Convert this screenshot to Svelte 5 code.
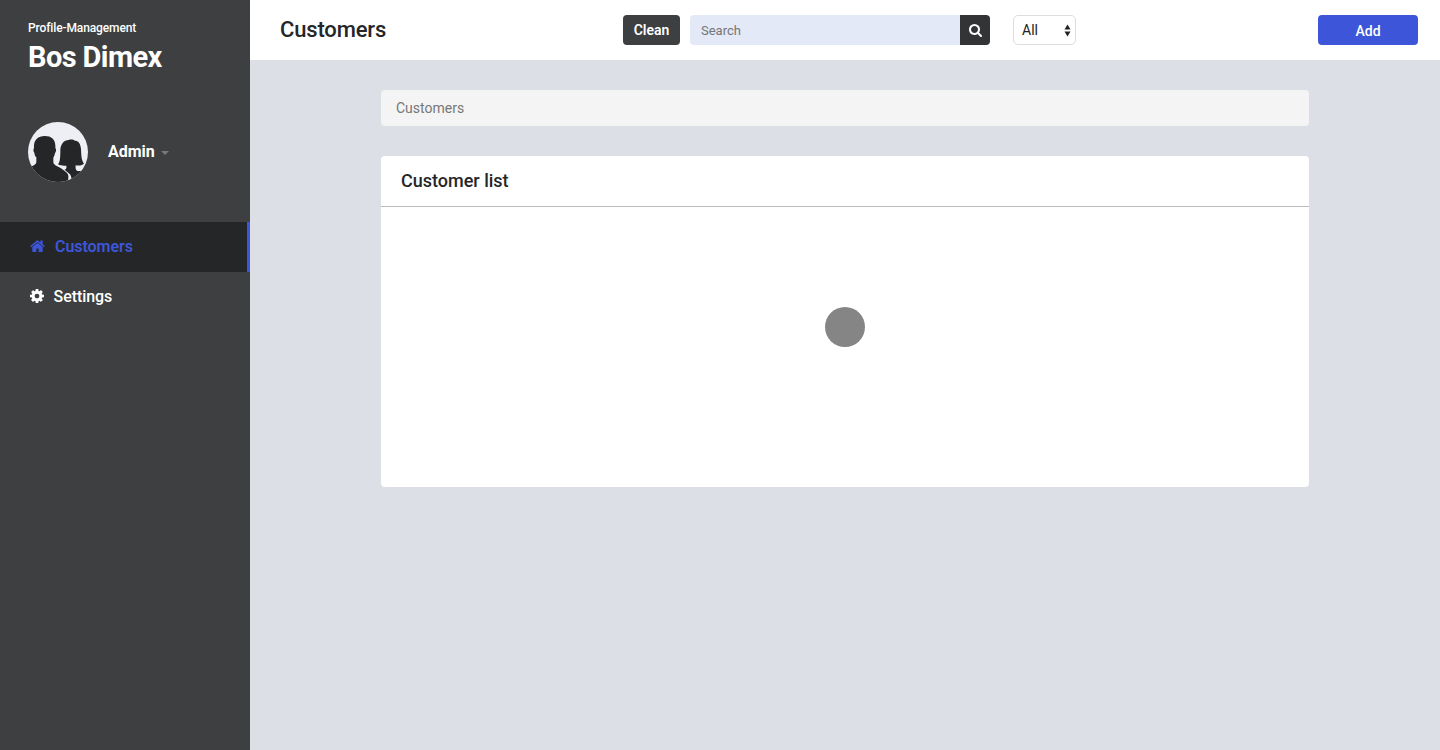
<script>
  const title = 'Customers';
  let query = $state('');
</script>

<div class="app">
  <aside>
    <div class="brand">
      <div class="small">Profile-Management</div>
      <div class="name">Bos Dimex</div>
    </div>
    <div class="user">
      <svg class="avatar" viewBox="0 0 180 180">
        <defs><clipPath id="round"><circle cx="90" cy="90" r="90" /></clipPath></defs>
        <g clip-path="url(#round)">
          <rect width="180" height="180" fill="#eeeff4" />
          <path fill="#252628" d="M90 127 C97 120 97 100 97 84 C98 66 108 54 122 54 C128 51 137 53 141 56 C152 55 158 66 159 82 C160 100 160 115 168 125 C162 130 152 132 143 130 C142 138 143 144 148 147 L160 147 L184 138 V184 H129 C131 170 131 161 124 155 L110 143 C115 141 116 137 115 131 C106 132 97 131 90 127 Z" />
          <path fill="#252628" d="M0 140 C12 130 24 131 25 120 V106 C21 103 20 98 19 92 C15 87 16 81 18 79 C16 54 29 42 50 42 C72 42 84 53 82 79 C86 81 84 89 81 93 C80 99 78 104 76 107 V121 C77 131 92 133 105 143 C119 153 122 157 121 166 L120 184 H0 Z" />
        </g>
      </svg>
      <span class="admin">Admin</span>
      <svg class="caret" viewBox="0 0 8 4"><path d="M0 0H8L4 4Z" fill="#77787a" /></svg>
    </div>
    <nav>
      <a class="active" href="#customers">
        <svg class="home" viewBox="0 0 1664 1312"><path fill="currentColor" d="M1408 768v480q0 26-19 45t-45 19H960V928H704v384H320q-26 0-45-19t-19-45V768q0-1 .5-3t.5-3l575-474 575 474q1 2 1 6zm223-69-62 74q-8 9-21 11h-3q-13 0-21-7L832 200 140 777q-12 8-24 7-13-2-21-11L33 699q-8-10-7-23.500t11-21.500L756 55q32-26 76-26t76 26l244 204V64q0-14 9-23t23-9h192q14 0 23 9t9 23v408l219 182q10 8 11 21.500t-7 23.500z" /></svg>
        <span>{title}</span>
      </a>
      <a href="#settings">
        <svg class="cog" viewBox="0 0 1536 1536"><path fill="currentColor" d="M1024 768q0-106-75-181t-181-75-181 75-75 181 75 181 181 75 181-75 75-181zm512-109v222q0 12-8 23t-20 13l-185 28q-19 54-39 91 35 50 107 138 10 12 10 25t-9 23q-27 37-99 108t-94 71q-12 0-26-9l-138-108q-44 23-91 38-16 136-29 186-7 28-36 28H657q-14 0-24.500-8.500T621 1506l-28-184q-49-16-90-37l-141 107q-10 9-25 9-14 0-25-11-126-114-165-168-7-10-7-23 0-12 8-23 15-21 51-66.500t54-70.500q-27-50-41-99L29 913q-13-2-21-12.500T0 877V655q0-12 8-23t19-13l186-28q14-46 39-92-40-57-107-138-10-12-10-24 0-10 9-23 26-36 98.500-107.500T337 135q13 0 26 10l138 107q44-23 91-38 16-136 29-186 7-28 36-28h222q14 0 24.500 8.500T915 30l28 184q49 16 90 37l142-107q9-9 24-9 13 0 25 10 129 119 165 170 7 8 7 22 0 12-8 23-15 21-51 66.500t-54 70.500q26 50 41 98l183 28q13 2 21 12.500t8 23.500z" /></svg>
        <span>Settings</span>
      </a>
    </nav>
  </aside>

  <section class="main">
    <header>
      <h1>{title}</h1>
      <div class="tools">
        <button class="clean">Clean</button>
        <input placeholder="Search" aria-label="Search" bind:value={query} />
        <button class="search" aria-label="Search">
          <svg viewBox="0 0 1664 1664"><path fill="currentColor" d="M1152 704q0-185-131.500-316.500T704 256 387.500 387.500 256 704t131.500 316.500T704 1152t316.500-131.500T1152 704zm512 832q0 52-38 90t-90 38q-54 0-90-38l-343-342q-179 124-399 124-143 0-273.500-55.500t-225-150-150-225T0 704t55.500-273.500 150-225 225-150T704 0t273.500 55.500 225 150 150 225T1408 704q0 220-124 399l343 343q37 37 37 90z" /></svg>
        </button>
        <button class="filter">
          <span>All</span>
          <svg viewBox="0 0 7 13"><path d="M3.500 .5L6.500 5.500H.5ZM.5 7.500H6.500L3.500 12.500Z" fill="#222" /></svg>
        </button>
      </div>
      <button class="add">Add</button>
    </header>
    <main>
      <div class="crumb">Customers</div>
      <div class="card">
        <h2>Customer list</h2>
        <div class="body"><div class="loader"></div></div>
      </div>
    </main>
  </section>
</div>

<style>
  :global(body) { margin: 0; }
  .app { display: flex; height: 750px; overflow: hidden; font-family: Roboto, sans-serif; color: #252628; background: #dddfe6; }
  .app *, .app { box-sizing: border-box; }
  aside { width: 250px; flex: none; background: #3e3f41; color: #fff; }
  .brand { height: 122px; padding: 20px 28px 0; }
  .small { font-size: 12px; line-height: 16px; font-weight: 500; letter-spacing: -.12px; }
  .name { font-size: 29px; line-height: 42px; font-weight: 700; letter-spacing: -.6px; }
  .user { display: flex; align-items: center; height: 60px; padding-left: 28px; }
  .avatar { width: 60px; height: 60px; margin-right: 20px; }
  .admin { font-size: 16px; line-height: 20px; font-weight: 700; }
  .caret { width: 8px; height: 4px; margin: 1px 0 0 6px; }
  nav { margin-top: 40px; }
  nav a { display: flex; align-items: center; height: 50px; padding: 0 0 2px 30px; color: #fff; text-decoration: none; font-size: 16px; font-weight: 500; }
  nav a.active { background: #252628; color: #3d56d9; border-right: 3px solid #3d56d9; font-weight: 600; letter-spacing: -.05px; }
  .home { width: 15px; height: 12px; margin-right: 10px; }
  .cog { width: 14px; height: 14px; margin-right: 9.500px; }
  nav a:not(.active) span { letter-spacing: -.06px; }
  .main { flex: 1; min-width: 0; }
  header { display: flex; align-items: center; height: 60px; padding: 0 22px 0 30px; background: #fff; }
  h1 { width: 343px; margin: 0; font-size: 22px; line-height: 30px; font-weight: 500; letter-spacing: -.16px; }
  button, input { height: 30px; border: 0; font: 500 14px Roboto, sans-serif; margin: 0; padding: 0; }
  .tools { display: flex; flex: 1; }
  .clean { width: 57px; margin-right: 10px; border-radius: 4px; background: #3e3f41; color: #fff; font-weight: 600; }
  input { width: 270px; padding: 0 11px; border-radius: 4px 0 0 4px; background: #e3e9f7; color: #252628; font-size: 13px; font-weight: 400; outline: 0; }
  input::placeholder { color: #757575; opacity: 1; }
  .search { display: flex; align-items: center; justify-content: center; width: 30px; margin-right: 23px; border-radius: 0 4px 4px 0; background: #333436; color: #fff; }
  .search svg { width: 13px; height: 13px; }
  .filter { display: flex; align-items: center; justify-content: space-between; width: 63px; padding: 0 4px 0 8px; border: 1px solid #ddd; border-radius: 5px; background: #fff; color: #222; font-weight: 400; }
  .filter svg { width: 7px; height: 13px; }
  .add { width: 100px; padding-top: 2px; border-radius: 4px; background: #3d56d9; color: #fff; }
  main { width: 928px; margin: 30px auto 0; }
  .crumb { height: 36px; padding-left: 15px; border-radius: 4px; background: #f4f4f4; color: #777; font-size: 14px; line-height: 36px; }
  .card { height: 331px; margin-top: 30px; border-radius: 4px; background: #fff; }
  h2 { height: 51px; margin: 0; padding-left: 20px; border-bottom: 1px solid #bbb; font-size: 18px; line-height: 50px; font-weight: 500; }
  .body { display: flex; justify-content: center; padding-top: 100px; }
  .loader { width: 40px; height: 40px; border-radius: 50%; background: #858585; }
</style>
